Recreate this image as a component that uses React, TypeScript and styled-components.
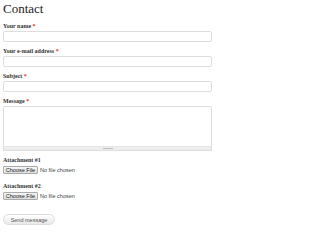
import styled, {createGlobalStyle} from "styled-components";

const GlobalStyle = createGlobalStyle`
  html, body {
    margin: 0;
    padding: 0;
    background: #fff;
  }
`;

const FIELDS = [
  {id: "name", label: "Your name"},
  {id: "mail", label: "Your e-mail address"},
  {id: "subject", label: "Subject"},
];

const ATTACHMENTS = ["Attachment #1", "Attachment #2"];

function App() {
  return (
    <Page>
      <GlobalStyle/>
      <Title>Contact</Title>
      <Form onSubmit={(e) => e.preventDefault()}>
        {FIELDS.map((field) =>
          <Field key={`field-${field.id}`}>
            <Label htmlFor={field.id}>
              {field.label} <Required>*</Required>
            </Label>
            <TextInput id={field.id} type="text"/>
          </Field>
        )}
        <Field>
          <Label htmlFor="message">
            Message <Required>*</Required>
          </Label>
          <TextAreaWrap>
            <TextArea id="message"/>
            <Grippie>
              <GrippieHandle/>
            </Grippie>
          </TextAreaWrap>
        </Field>
        {ATTACHMENTS.map((name) =>
          <FileField key={`file-${name}`}>
            <Label as="div">{name}</Label>
            <FileRow>
              <FileButton type="button">Choose File</FileButton>
              <FileStatus>No file chosen</FileStatus>
            </FileRow>
          </FileField>
        )}
        <SubmitButton type="submit">Send message</SubmitButton>
      </Form>
    </Page>
  );
}

export default App;

const Page = styled.div`
  padding: 0 8px 0 3px;
  font-family: "Liberation Serif", "Times New Roman", serif;
  color: #333;
`;

const Title = styled.h1`
  margin: 0;
  padding-top: 1px;
  font-size: 13px;
  line-height: 16px;
  font-weight: normal;
  color: #222;
`;

const Form = styled.form`
  display: flex;
  flex-direction: column;
  padding-top: 5px;
`;

const Field = styled.div`
  display: flex;
  flex-direction: column;
  gap: 1px;
  margin-bottom: 5px;
`;

const FileField = styled(Field)`
  gap: 2px;
  margin-bottom: 8px;
`;

const Label = styled.label`
  display: block;
  font-size: 6px;
  line-height: 8px;
  font-weight: bold;
  color: #333;
`;

const Required = styled.span`
  color: #e33;
`;

const TextInput = styled.input`
  box-sizing: border-box;
  width: 209px;
  height: 11px;
  margin: 0;
  padding: 0 2px;
  border: 1px solid #ddd;
  border-radius: 2px;
  font-size: 6px;
  background: #fff;
  outline: none;
`;

const TextAreaWrap = styled.div`
  display: flex;
  flex-direction: column;
  width: 209px;
`;

const TextArea = styled.textarea`
  box-sizing: border-box;
  width: 100%;
  height: 40px;
  margin: 0;
  padding: 2px;
  border: 1px solid #ddd;
  border-bottom: none;
  border-radius: 2px 2px 0 0;
  font-size: 6px;
  resize: none;
  outline: none;
  background: #fff;
`;

const Grippie = styled.div`
  box-sizing: border-box;
  height: 5px;
  display: flex;
  justify-content: center;
  align-items: center;
  border: 1px solid #ddd;
  border-top: 1px solid #e6e6e6;
  background: #eee;
`;

const GrippieHandle = styled.div`
  width: 10px;
  height: 1px;
  background: #bbb;
`;

const FileRow = styled.div`
  display: flex;
  align-items: center;
  gap: 2px;
`;

const FileButton = styled.button`
  box-sizing: border-box;
  height: 8px;
  width: 35px;
  padding: 0;
  margin: 0;
  border: 1px solid #aaa;
  border-radius: 1px;
  background: linear-gradient(#f6f6f6, #dedede);
  font-family: "Liberation Sans", Arial, sans-serif;
  font-size: 5.5px;
  line-height: 6px;
  color: #222;
`;

const FileStatus = styled.span`
  font-family: "Liberation Sans", Arial, sans-serif;
  font-size: 5.5px;
  color: #444;
`;

const SubmitButton = styled.button`
  align-self: flex-start;
  box-sizing: border-box;
  margin-top: 6px;
  width: 52px;
  height: 11px;
  padding: 0;
  border: 1px solid #ddd;
  border-radius: 6px;
  background: linear-gradient(#fff, #e9e9e9);
  font-family: "Liberation Sans", Arial, sans-serif;
  font-size: 5.5px;
  color: #555;
`;
